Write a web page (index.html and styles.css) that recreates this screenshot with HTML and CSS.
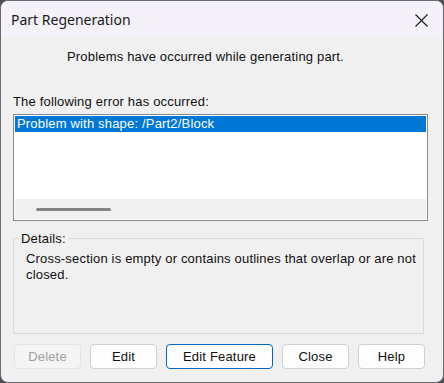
FILE: index.html
```html
<!DOCTYPE html>
<html lang="en">
<head>
    <meta charset="UTF-8">
    <title>Part Regeneration</title>
    <link rel="stylesheet" href="styles.css">
</head>
<body>
    <div class="dialog">
        <div class="titlebar">
            <span class="title">Part Regeneration</span>
            <svg class="close-x" width="13" height="13" viewBox="0 0 13 13">
                <path d="M0.5 0.5 L12.5 12.5 M12.5 0.5 L0.5 12.5" stroke="#1a1a1a" stroke-width="1.1" fill="none"/>
            </svg>
        </div>
        <div class="content">
            <p class="message">Problems have occurred while generating part.</p>
            <p class="label">The following error has occurred:</p>
            <div class="listbox">
                <div class="list-items">
                    <div class="item selected">Problem with shape: /Part2/Block</div>
                </div>
                <div class="hscroll"><div class="thumb"></div></div>
            </div>
            <fieldset class="details">
                <legend>Details:</legend>
                <p>Cross-section is empty or contains outlines that overlap or are not closed.</p>
            </fieldset>
            <div class="buttons">
                <button class="btn" disabled>Delete</button>
                <button class="btn">Edit</button>
                <button class="btn default wide">Edit Feature</button>
                <button class="btn">Close</button>
                <button class="btn">Help</button>
            </div>
        </div>
    </div>
</body>
</html>
```

FILE: styles.css
```css
html {
    background-color: #4d4d54;
}
body {
    margin: 0;
    font-family: "Liberation Sans", Arial, sans-serif;
    font-size: 13px;
    letter-spacing: 0.18px;
    color: #111;
}
.dialog {
    width: 442px;
    height: 381px;
    border: 1px solid #6a6a70;
    border-radius: 8px;
    overflow: hidden;
    background-color: #f0f0f0;
    display: flex;
    flex-direction: column;
}
.titlebar {
    height: 36px;
    background-color: #f4f1f8;
    display: flex;
    align-items: center;
    justify-content: space-between;
    padding: 0 15px 0 10px;
    letter-spacing: 0;
}
.title {
    font-family: "Noto Sans", "Open Sans", sans-serif;
    font-size: 14px;
    color: #1a1a1a;
    margin-top: 1px;
}
.close-x {
    margin-top: 2px;
}
.content {
    padding: 0 12px;
    display: flex;
    flex-direction: column;
}
.message {
    margin: 12px 0 0 54px;
    line-height: 15px;
}
.label {
    margin: 30px 0 0 0;
    line-height: 15px;
}
.listbox {
    margin-top: 5px;
    width: 411px;
    height: 103px;
    border: 1px solid #868a90;
    background-color: #fff;
    padding: 1px;
    display: flex;
    flex-direction: column;
}
.list-items {
    flex: 1;
}
.item {
    height: 16px;
    line-height: 16px;
    padding-left: 2px;
}
.item.selected {
    background-color: #0078d7;
    color: #fff;
}
.hscroll {
    height: 20px;
    background-color: #f0f0f0;
    display: flex;
    align-items: center;
}
.thumb {
    margin-left: 21px;
    margin-top: 1px;
    width: 75px;
    height: 3px;
    border-radius: 2px;
    background-color: #858585;
}
.details {
    margin: 10px 0 0 0;
    width: 411px;
    height: 103px;
    box-sizing: border-box;
    border: 1px solid #dadada;
    padding: 0 2px 0 12px;
}
.details legend {
    padding: 0 2px;
    margin-left: -7px;
    line-height: 15px;
}
.details p {
    margin: 5px 0 0 0;
    line-height: 16px;
}
.buttons {
    margin-top: 10px;
    display: flex;
    gap: 9px;
    padding-left: 1px;
}
.btn {
    width: 67px;
    height: 25px;
    font-family: "Liberation Sans", Arial, sans-serif;
    font-size: 13px;
    letter-spacing: 0.18px;
    color: #111;
    background-color: #fdfdfd;
    border: 1px solid #d0d0d0;
    border-radius: 4px;
    padding: 0;
}
.btn.wide {
    width: 107px;
}
.btn.default {
    border-color: #0067c0;
}
.btn:disabled {
    background-color: #f5f5f5;
    border-color: #e5e5e5;
    color: #a0a0a0;
}
```
